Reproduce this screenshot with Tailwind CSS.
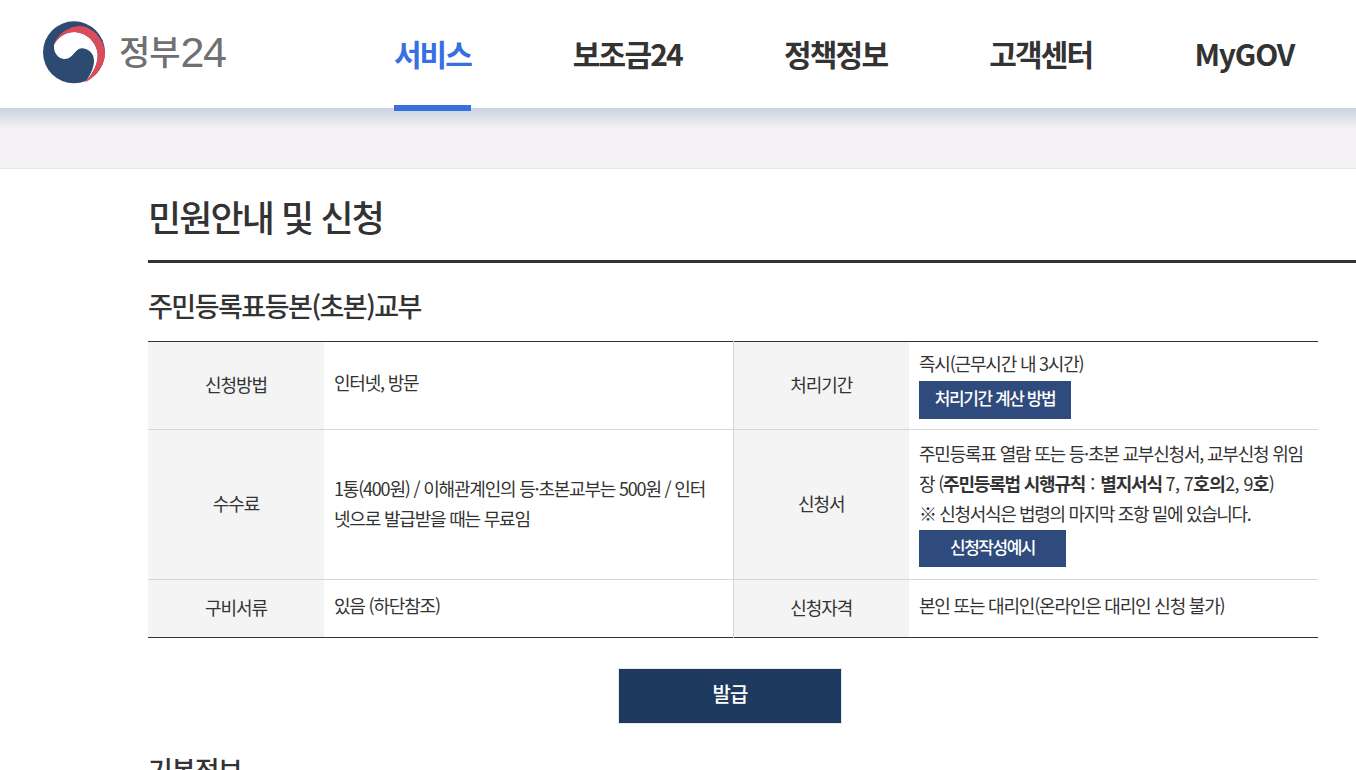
<!DOCTYPE html>
<html lang="ko">
<head>
<meta charset="utf-8">
<script src="https://cdn.jsdelivr.net/npm/@tailwindcss/browser@4"></script>
<title>정부24</title>
</head>
<body class="bg-white">
<div class="h-[770px] overflow-hidden font-['Noto_Sans_CJK_KR','Noto_Sans',sans-serif] text-[#333333]">
  <header class="flex h-[108px] bg-white">
    <a class="flex w-[394px] shrink-0 items-start">
      <svg class="mt-[10px] ml-[30px] shrink-0" width="90" height="85" viewBox="0 0 270 255">
        <circle cx="132" cy="127" r="93" fill="#2c4a72"/>
        <path d="M72 105 C80 85 105 66 135 66 C170 68 198 95 203 130 C205 160 190 190 165 218 C180 195 192 175 192 152 C192 130 175 115 155 115 C135 115 130 147 105 147 C85 147 70 130 72 105 Z" fill="#ffffff"/>
        <path d="M165 218 C190 205 206 190 215 168 L240 220 L180 240 Z" fill="#ffffff"/>
        <path d="M72 105 C80 75 115 48 150 48 C190 50 222 90 225 127 C225 165 200 200 165 218 C190 190 205 160 203 130 C198 95 170 68 135 66 C105 66 80 85 72 105 Z" fill="#dc4b5a"/>
      </svg>
      <span class="mt-[26px] ml-[-1px] text-[34px] leading-[50px] font-medium tracking-[-1px] text-[#6f7072]">정부</span>
      <span class="mt-[27px] ml-[1px] font-['Liberation_Sans',sans-serif] text-[43px] leading-[50px] tracking-[-1.5px] text-[#6f7072]">24</span>
    </a>
    <nav class="flex h-[111px] gap-[102px] text-[30px] leading-[40px] font-bold">
      <a class="relative z-10 h-[111px] border-b-[6px] border-[#3770df] pt-[33px] tracking-[-2px] text-[#3770df]">서비스</a>
      <a class="pt-[33px] tracking-[-1.8px]">보조금24</a>
      <a class="pt-[33px] tracking-[-1.8px]">정책정보</a>
      <a class="pt-[33px] tracking-[-1.8px]">고객센터</a>
      <a class="pt-[33px] tracking-[-1.2px]">MyGOV</a>
    </nav>
  </header>
  <div class="h-[61px] border-b border-[#e6e6e6] bg-[#f5f3f5]">
    <div class="h-[22px] bg-gradient-to-b from-[#cdd3e1] to-[#f5f3f5]"></div>
  </div>
  <main class="pl-[148px]">
    <h1 class="h-[94px] border-b-[3px] border-[#333333] pt-[22px] text-[36px] leading-[50px] font-medium tracking-[-1.9px]">민원안내 및 신청</h1>
    <h2 class="mt-[23px] text-[27px] leading-[40px] font-medium tracking-[-1.5px]">주민등록표등본(초본)교부</h2>
    <table class="mt-[15px] w-[1170px] table-fixed border-collapse border-y border-[#333333] text-[18px] leading-[30px] tracking-[-1.2px]">
      <colgroup>
        <col class="w-[176px]"><col class="w-[409px]"><col class="w-[176px]"><col class="w-[409px]">
      </colgroup>
      <tbody>
        <tr class="h-[88px] border-b border-[#d6d6d6]">
          <th class="bg-[#f4f4f4] pb-[4px] font-normal tracking-[-1px]">신청방법</th>
          <td class="px-[10px] pb-[8px] align-middle">인터넷, 방문</td>
          <th class="border-l border-[#d6d6d6] bg-[#f4f4f4] pb-[3px] font-normal tracking-[-1px]">처리기간</th>
          <td class="px-[10px] pt-[6px] align-top">
            <div>즉시(근무시간 내 3시간)</div>
            <a class="mt-[3px] inline-block h-[38px] w-[152px] bg-[#2f4a7c] text-center text-[17px] leading-[33px] font-medium tracking-[-1.4px] text-white">처리기간 계산 방법</a>
          </td>
        </tr>
        <tr class="h-[150px] border-b border-[#d6d6d6]">
          <th class="bg-[#f4f4f4] pb-[3px] font-normal tracking-[-1px]">수수료</th>
          <td class="pr-[20px] pb-[4px] pl-[10px] align-middle">1통(400원) / 이해관계인의 등·초본교부는 500원 / 인터넷으로 발급받을 때는 무료임</td>
          <th class="border-l border-[#d6d6d6] bg-[#f4f4f4] pb-[3px] font-normal tracking-[-1px]">신청서</th>
          <td class="px-[10px] pt-[8px] align-top">
            <div>주민등록표 열람 또는 등·초본 교부신청서, 교부신청 위임장 (<b class="font-bold">주민등록법 시행규칙</b><span class="tracking-[0px]"> : </span><b class="font-bold">별지서식</b> <span class="tracking-[-0.6px]">7, 7<b class="font-bold">호의</b>2, 9<b class="font-bold">호</b>)</span></div>
            <div class="tracking-[-1.35px]">※ 신청서식은 법령의 마지막 조항 밑에 있습니다.</div>
            <a class="mt-[2px] inline-block h-[37px] w-[147px] bg-[#2f4a7c] text-center text-[17px] leading-[33px] font-medium tracking-[-1.5px] text-white">신청작성예시</a>
          </td>
        </tr>
        <tr class="h-[58px]">
          <th class="bg-[#f4f4f4] pb-[4px] font-normal tracking-[-1px]">구비서류</th>
          <td class="px-[10px] pb-[8px] align-middle">있음 (하단참조)</td>
          <th class="border-l border-[#d6d6d6] bg-[#f4f4f4] pb-[4px] font-normal tracking-[-1px]">신청자격</th>
          <td class="px-[10px] pb-[8px] align-middle">본인 또는 대리인(온라인은 대리인 신청 불가)</td>
        </tr>
      </tbody>
    </table>
    <div class="mt-[30px] flex w-[1164px] justify-center">
      <a class="block h-[56px] w-[224px] border border-[#e3e6ea] bg-[#1e3a5f] text-center text-[20px] leading-[50px] font-medium tracking-[-1px] text-white">발급</a>
    </div>
    <h2 class="mt-[26px] text-[27px] leading-[40px] font-medium tracking-[-1.5px]">기본정보</h2>
  </main>
</div>
</body>
</html>
